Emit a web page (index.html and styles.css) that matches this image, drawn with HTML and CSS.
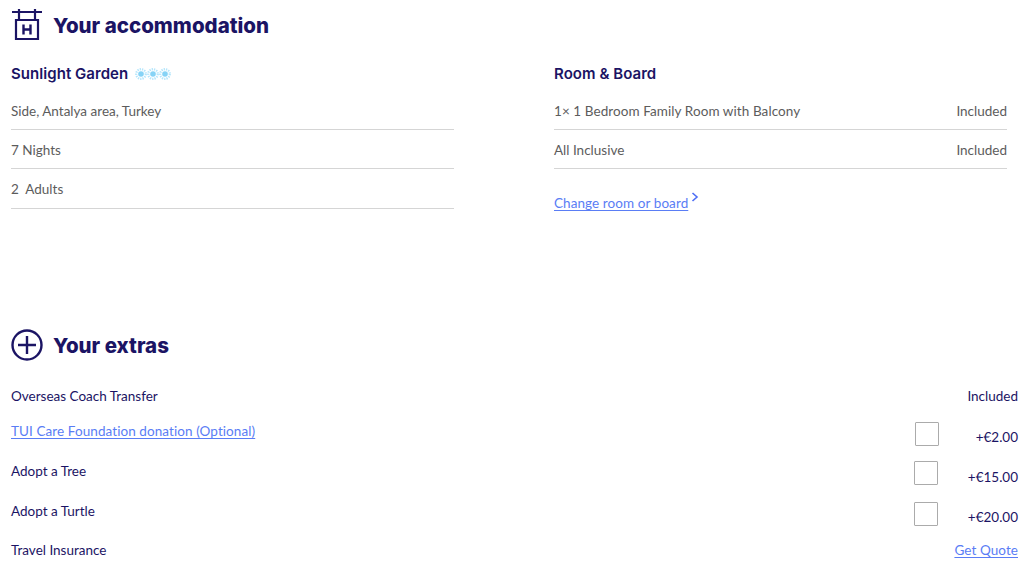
FILE: index.html
```html
<!DOCTYPE html>
<html lang="en">
<head>
<meta charset="utf-8">
<title>Your accommodation</title>
<link rel="stylesheet" href="styles.css">
</head>
<body>
<section class="accommodation">
  <h2 class="section-title">
    <svg class="icon" viewBox="0 0 32 32" width="32" height="32" fill="none" stroke="#1b1464" stroke-width="2.200">
      <path d="M1 3H31M8 0V11M24 0V11"/>
      <path d="M5 11H27V30H5Z"/>
      <path d="M12.500 15.500V25.500M19.500 15.500V25.500M12.500 20.500H19.500" stroke-width="2.400"/>
    </svg>
    <span class="title-text">Your accommodation</span>
  </h2>
  <div class="columns">
    <div class="col col-left">
      <h3 class="sub-title">Sunlight Garden
        <span class="stars">
          <svg viewBox="0 0 12 12" width="12" height="12"><use href="#flower"/></svg>
          <svg viewBox="0 0 12 12" width="12" height="12"><use href="#flower"/></svg>
          <svg viewBox="0 0 12 12" width="12" height="12"><use href="#flower"/></svg>
        </span>
      </h3>
      <div class="row"><span>Side, Antalya area, Turkey</span></div>
      <div class="row"><span>7 Nights</span></div>
      <div class="row row-last"><span>2&nbsp; Adults</span></div>
    </div>
    <div class="col col-right">
      <h3 class="sub-title">Room &amp; Board</h3>
      <div class="row"><span class="wide">1× 1 Bedroom Family Room with Balcony</span><span>Included</span></div>
      <div class="row"><span>All Inclusive</span><span>Included</span></div>
      <p class="change"><a href="#">Change room or board</a><svg class="chev" viewBox="0 0 8 12" width="8" height="12" fill="none" stroke="#4f6ff5" stroke-width="1.600"><path d="M1.500 1L6 5L1.500 9"/></svg></p>
    </div>
  </div>
</section>
<section class="extras">
  <h2 class="section-title">
    <svg class="icon" viewBox="0 0 32 32" width="32" height="32" fill="none" stroke="#1b1464" stroke-width="2.400">
      <circle cx="16" cy="16" r="14.500"/>
      <path d="M16 7V25M7 16H25"/>
    </svg>
    <span class="title-text">Your extras</span>
  </h2>
  <ul class="extra-list">
    <li class="extra e1"><span>Overseas Coach Transfer</span><span>Included</span></li>
    <li class="extra e2"><a href="#">TUI Care Foundation donation (Optional)</a><span class="box"></span><span class="price p2">+€2.00</span></li>
    <li class="extra e3"><span>Adopt a Tree</span><span class="box box-up"></span><span class="price p3">+€15.00</span></li>
    <li class="extra e4"><span>Adopt a Turtle</span><span class="box"></span><span class="price p3">+€20.00</span></li>
    <li class="extra e5"><span>Travel Insurance</span><a href="#">Get Quote</a></li>
  </ul>
</section>
<svg class="defs" width="0" height="0">
  <defs>
    <g id="flower">
      <circle cx="6" cy="6" r="2.800" fill="#86d3f6"/>
      <circle cx="6" cy="6" r="4.800" fill="none" stroke="#b4e5fb" stroke-width="2.200" stroke-dasharray="1.300 1"/>
    </g>
  </defs>
</svg>
</body>
</html>
```
FILE: styles.css
```css
* { box-sizing: border-box; }
html, body { margin: 0; padding: 0; background: #fff; }
body {
  width: 1024px;
  height: 568px;
  overflow: hidden;
  font-family: "Lato", "Liberation Sans", sans-serif;
  font-size: 13.500px;
  line-height: 18px;
  color: #1b1464;
}
.accommodation { padding: 9px 17px 0 11px; height: 329px; }
.section-title {
  display: flex;
  align-items: center;
  gap: 10px;
  margin: 0;
  height: 32px;
  font-family: "Inter", "Lato", sans-serif;
  font-size: 20.500px;
  font-weight: 800;
  color: #1b1464;
}
.title-text { padding-top: 2px; }
.icon { flex: none; }
.columns { display: flex; gap: 100px; margin-top: 22px; }
.col-left { width: 443px; }
.col-right { width: 453px; }
.sub-title {
  display: flex;
  align-items: center;
  gap: 7px;
  margin: 0;
  height: 19px;
  padding-top: 2px;
  font-family: "Inter", "Lato", sans-serif;
  font-size: 15px;
  font-weight: 600;
  letter-spacing: 0.05px;
  color: #1b1464;
}
.stars { display: flex; }
.row {
  display: flex;
  justify-content: space-between;
  align-items: center;
  height: 39px;
  padding-top: 1px;
  border-bottom: 1px solid #d5d5d5;
  color: #5c5c5c;
}
.row-last { height: 40px; }
.wide { letter-spacing: 0.08px; }
.sub-title + .row { margin-top: 9px; }
.change { margin: 25px 0 0; display: flex; align-items: flex-start; gap: 3px; }
a { color: #5a7df5; letter-spacing: 0.08px; text-underline-offset: 2px; }
.chev { margin-top: -2px; }
.extras { padding: 0 6px 0 11px; }
.extra-list { list-style: none; margin: 26px 0 0; padding: 0; }
.extra { display: flex; align-items: flex-start; }
.extra > :first-child { margin-right: auto; }
.e1 { height: 35px; }
.e2, .e3 { height: 40px; }
.e4 { height: 39px; }
.box {
  display: block;
  width: 24px;
  height: 24px;
  border: 1.500px solid #ababab;
  border-radius: 1px;
}
.box-up { margin-top: -1px; }
.price { text-align: right; padding-top: 6px; }
.p2 { width: 79px; }
.p3 { width: 80px; }
.defs { position: absolute; }
```
